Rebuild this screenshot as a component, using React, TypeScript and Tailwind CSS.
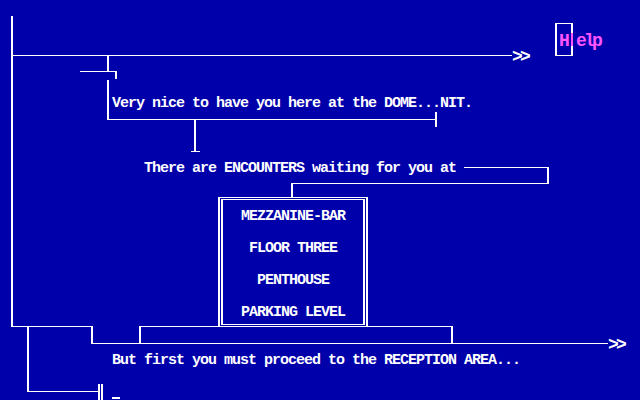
import React from 'react';

/* ─── wiring: [x, y, w, h] — verticals 2px, horizontals 1px ─── */
const wires: [number, number, number, number][] = [
  // top rail
  [11, 16, 2, 311],
  [13, 55, 499, 1],
  [107, 55, 2, 17],
  [80, 71, 37, 1],
  [115, 71, 2, 8],
  [107, 80, 2, 40],
  [107, 119, 330, 1],
  [435, 112, 2, 15],
  [194, 119, 2, 32],
  [191, 151, 9, 1],
  // encounters branch
  [464, 167, 85, 1],
  [547, 167, 2, 17],
  [292, 183, 257, 1],
  [291, 183, 2, 14],
  // bottom rail
  [11, 326, 82, 1],
  [91, 326, 2, 18],
  [91, 343, 517, 1],
  [139, 326, 2, 17],
  [139, 326, 79, 1],
  [368, 326, 85, 1],
  [451, 326, 2, 17],
  [27, 326, 2, 66],
  [27, 391, 72, 1],
  [98, 384, 2, 16],
  [101, 384, 2, 16],
];

const floors = ['MEZZANINE-BAR', 'FLOOR THREE', 'PENTHOUSE', 'PARKING LEVEL'];

const txt =
  "absolute whitespace-pre font-['Liberation_Mono','DejaVu_Sans_Mono',monospace] font-bold text-[15px] leading-[14px] tracking-[-1px] text-white";

const big =
  "absolute whitespace-pre font-['Liberation_Mono','DejaVu_Sans_Mono',monospace] font-bold text-[18px] leading-[14px] tracking-[-2.8px]";

export default function App() {
  return (
    <div className="relative h-[400px] w-[640px] overflow-hidden bg-[#0000aa]">
      {/* lines of the diagram */}
      <svg
        className="absolute inset-0"
        width="640"
        height="400"
        viewBox="0 0 640 400"
        shapeRendering="crispEdges"
      >
        {wires.map(([x, y, w, h], i) => (
          <rect key={i} x={x} y={y} width={w} height={h} fill="#ffffff" />
        ))}
      </svg>

      <div className={`${big} left-[512px] top-[50px] text-white`}>&gt;&gt;</div>
      <div className={`${big} left-[608px] top-[338px] text-white`}>&gt;&gt;</div>

      {/* help key */}
      <div className="absolute left-[555px] top-[23px] h-[33px] w-[18px] border-x-2 border-y border-white" />
      <div className="absolute left-[571px] top-[33px] h-[13px] w-[2px] bg-[#ff55ff]" />
      <div className={`${big} left-[559px] top-[34px] text-[#ff55ff]`}>H</div>
      <div className={`${big} left-[576px] top-[34px] text-[#ff55ff]`}>elp</div>

      <div className={`${txt} left-[112px] top-[97px]`}>
        Very nice to have you here at the DOME...NIT.
      </div>
      <div className={`${txt} left-[144px] top-[162px]`}>
        There are ENCOUNTERS waiting for you at
      </div>

      {/* floor menu, double frame */}
      <div className="absolute left-[218px] top-[197px] h-[130px] w-[150px] border-x-2 border-y border-white p-px">
        <div className="flex h-full w-full flex-col items-center gap-[18px] border-x-2 border-y border-white pt-[10px]">
          {floors.map((f) => (
            <div
              key={f}
              className="whitespace-pre font-['Liberation_Mono',monospace] text-[15px] font-bold leading-[14px] tracking-[-1px] text-white"
            >
              {f}
            </div>
          ))}
        </div>
      </div>

      <div className={`${txt} left-[112px] top-[354px]`}>
        But first you must proceed to the RECEPTION AREA...
      </div>

      {/* blinking cursor */}
      <div className="absolute left-[112px] top-[397px] h-[2px] w-[8px] bg-white" />
    </div>
  );
}
